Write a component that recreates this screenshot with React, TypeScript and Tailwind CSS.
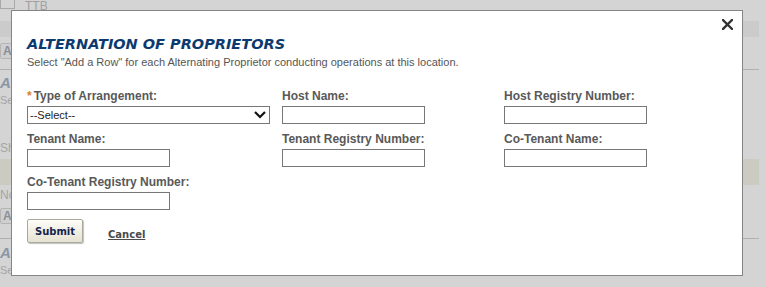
import React from "react";

const Field: React.FC<{ label: string; required?: boolean; children: React.ReactNode }> = ({
  label,
  required,
  children,
}) => (
  <div className="flex flex-col">
    <label className="h-[17px] text-[12px] font-bold leading-[14px] text-[#595959]">
      {required && <span className="mr-[2px] text-[#d9822b]">*</span>}
      {label}
    </label>
    {children}
  </div>
);

const TextBox = () => (
  <input type="text" className="h-[18px] w-[143px] border border-[#777] bg-white outline-none" />
);

export default function App() {
  return (
    <div
      className="relative h-[287px] w-[765px] overflow-hidden bg-[#d4d4d4] text-[#9a9a9a]"
      style={{ fontFamily: '"Liberation Sans", Arial, sans-serif' }}
    >
      {/* Page underneath the overlay */}
      <div className="w-[759px]">
        <div className="flex h-[21px] items-start gap-[10px]">
          <div className="h-[9px] w-[15px] border-x border-b border-[#a8a8a8]" />
          <span className="text-[12px] leading-[12px] text-[#a0a0a0]">TTB</span>
        </div>
        <div className="h-[16px] bg-[#cbcbcb]" />
        <div className="mt-[6px] h-[16px] w-[60px] rounded-[2px] border border-[#b5b5b5] bg-[#cfcfcf] px-[2px] text-[12px] font-bold leading-[14px] text-[#8a8f98]">
          Add
        </div>
        <div className="mt-[10px] border-t border-[#b0b0b0]" />
        <div className="mt-[5px] text-[15px] font-bold italic leading-[16px] text-[#8a96a6]">ALT</div>
        <div className="mt-[3px] text-[11px] leading-[13px] text-[#a4a4a4]">Select</div>
        <div className="mt-[34px] text-[12px] leading-[14px] text-[#a4a4a4]">Show</div>
        <div className="mt-[4px] h-[26px] bg-[#cbcbc2]" />
        <div className="mt-[3px] text-[12px] leading-[14px] text-[#a4a4a4]">No</div>
        <div className="mt-[6px] h-[16px] w-[60px] rounded-[2px] border border-[#b5b5b5] bg-[#cfcfcf] px-[2px] text-[12px] font-bold leading-[14px] text-[#8a8f98]">
          Add
        </div>
        <div className="mt-[14px] border-t border-[#b0b0b0]" />
        <div className="mt-[6px] text-[15px] font-bold italic leading-[16px] text-[#8a96a6]">ALT</div>
        <div className="mt-[3px] text-[11px] leading-[13px] text-[#a4a4a4]">Select</div>
      </div>

      {/* Modal */}
      <div className="absolute left-[11px] top-[10px] h-[266px] w-[732px] border border-[#858585] bg-white pl-[15px] pt-[24px]">
        <button className="absolute right-[9px] top-[8px] text-[#333]" aria-label="Close">
          <svg width="11" height="11" viewBox="0 0 11 11">
            <path d="M1 1 L10 10 M10 1 L1 10" stroke="currentColor" strokeWidth="2.4" strokeLinecap="square" />
          </svg>
        </button>

        <h2
          className="text-[14.5px] font-bold italic leading-[18px] text-[#0d3a6e]"
          style={{ fontFamily: '"DejaVu Sans", Verdana, sans-serif' }}
        >
          ALTERNATION OF PROPRIETORS
        </h2>
        <p className="mt-[3px] text-[11px] leading-[13px] text-[#555]">
          Select "Add a Row" for each Alternating Proprietor conducting operations at this location.
        </p>

        <div className="mt-[20px] grid grid-cols-[255px_222px_1fr] gap-y-[8px]">
          <Field label="Type of Arrangement:" required>
            <div className="flex h-[18px] w-[243px] items-center justify-between border border-[#777] bg-white pl-[2px] pr-[3px]">
              <span className="text-[11px] leading-[13px] text-[#222]">--Select--</span>
              <svg width="12" height="8" viewBox="0 0 12 8">
                <path d="M1 1 L6 6 L11 1" stroke="#111" strokeWidth="2.2" fill="none" />
              </svg>
            </div>
          </Field>
          <Field label="Host Name:">
            <TextBox />
          </Field>
          <Field label="Host Registry Number:">
            <TextBox />
          </Field>

          <Field label="Tenant Name:">
            <TextBox />
          </Field>
          <Field label="Tenant Registry Number:">
            <TextBox />
          </Field>
          <Field label="Co-Tenant Name:">
            <TextBox />
          </Field>

          <Field label="Co-Tenant Registry Number:">
            <TextBox />
          </Field>
        </div>

        <div
          className="mt-[9px] flex items-start gap-[25px]"
          style={{ fontFamily: '"DejaVu Sans", Verdana, sans-serif' }}
        >
          <button className="h-[24px] w-[56px] rounded-[2px] border border-[#a9a9a0] bg-gradient-to-b from-[#fdfcf6] to-[#e6e2d2] text-[10px] font-bold text-[#14234d] shadow-[1px_1px_1px_rgba(0,0,0,0.25)]">
            Submit
          </button>
          <a className="mt-[10px] text-[10px] font-bold leading-[12px] text-[#4a4a4a] underline">Cancel</a>
        </div>
      </div>
    </div>
  );
}
